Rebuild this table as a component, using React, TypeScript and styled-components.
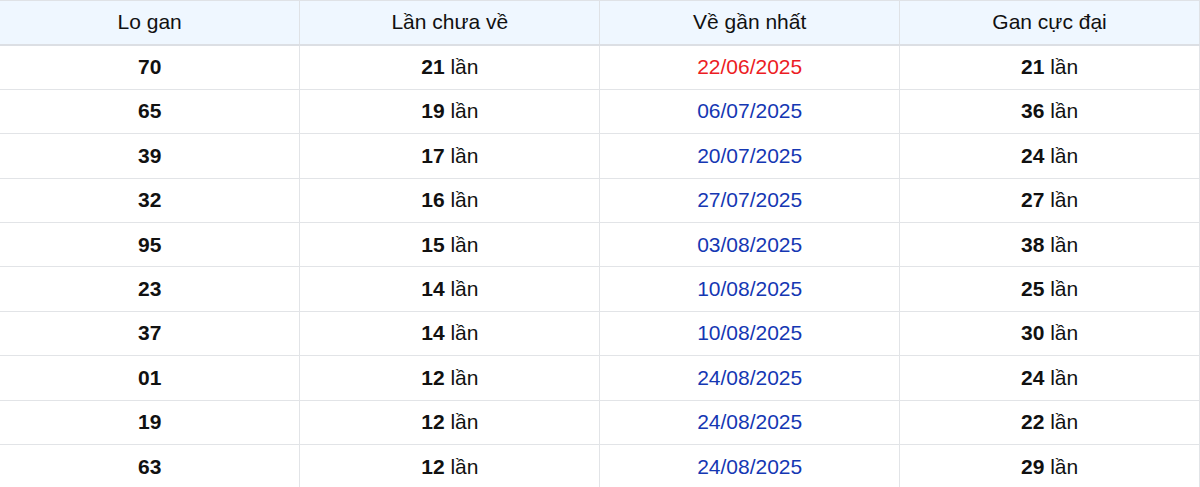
import React from "react";
import styled, { createGlobalStyle } from "styled-components";

const GlobalStyle = createGlobalStyle`
  * {
    box-sizing: border-box;
    margin: 0;
    padding: 0;
  }
  body {
    background: #ffffff;
    font-family: "Liberation Sans", Arial, sans-serif;
    color: #111111;
  }
`;

type Row = {
  lo: string;
  missed: number;
  last: string;
  max: number;
  hot?: boolean;
};

const rows: Row[] = [
  { lo: "70", missed: 21, last: "22/06/2025", max: 21, hot: true },
  { lo: "65", missed: 19, last: "06/07/2025", max: 36 },
  { lo: "39", missed: 17, last: "20/07/2025", max: 24 },
  { lo: "32", missed: 16, last: "27/07/2025", max: 27 },
  { lo: "95", missed: 15, last: "03/08/2025", max: 38 },
  { lo: "23", missed: 14, last: "10/08/2025", max: 25 },
  { lo: "37", missed: 14, last: "10/08/2025", max: 30 },
  { lo: "01", missed: 12, last: "24/08/2025", max: 24 },
  { lo: "19", missed: 12, last: "24/08/2025", max: 22 },
  { lo: "63", missed: 12, last: "24/08/2025", max: 29 },
];

const headers = ["Lo gan", "Lần chưa về", "Về gần nhất", "Gan cực đại"];

const App = () => {
  return (
    <>
      <GlobalStyle />
      <Table>
        <colgroup>
          <col style={{ width: "25%" }} />
          <col style={{ width: "25%" }} />
          <col style={{ width: "25%" }} />
          <col style={{ width: "25%" }} />
        </colgroup>
        <thead>
          <tr>
            {headers.map((h) => (
              <HeadCell key={h}>{h}</HeadCell>
            ))}
          </tr>
        </thead>
        <tbody>
          {rows.map((r) => (
            <tr key={r.lo}>
              <Cell>
                <Strong>{r.lo}</Strong>
              </Cell>
              <Cell>
                <Strong>{r.missed}</Strong> lần
              </Cell>
              <Cell>
                <DateText $hot={r.hot}>{r.last}</DateText>
              </Cell>
              <Cell>
                <Strong>{r.max}</Strong> lần
              </Cell>
            </tr>
          ))}
        </tbody>
      </Table>
    </>
  );
};

export default App;

const Table = styled.table`
  width: 1200px;
  border-collapse: collapse;
  table-layout: fixed;
  font-size: 21px;
`;

const HeadCell = styled.th`
  height: 44.4px;
  padding: 0 8px;
  background: #eff7ff;
  font-weight: 400;
  color: #111111;
  text-align: center;
  vertical-align: middle;
  line-height: 24px;
  border: 1px solid #dfe2e6;
  border-bottom: 2px solid #dcdfe4;
  &:first-child {
    border-left: none;
  }
`;

const Cell = styled.td`
  height: 44.4px;
  padding: 0 8px;
  text-align: center;
  vertical-align: middle;
  line-height: 24px;
  color: #111111;
  border: 1px solid #e2e4e7;
  &:first-child {
    border-left: none;
  }
`;

const Strong = styled.b`
  font-weight: 700;
`;

const DateText = styled.span<{ $hot?: boolean }>`
  color: ${(p) => (p.$hot ? "#ec1c24" : "#1537b3")};
`;
